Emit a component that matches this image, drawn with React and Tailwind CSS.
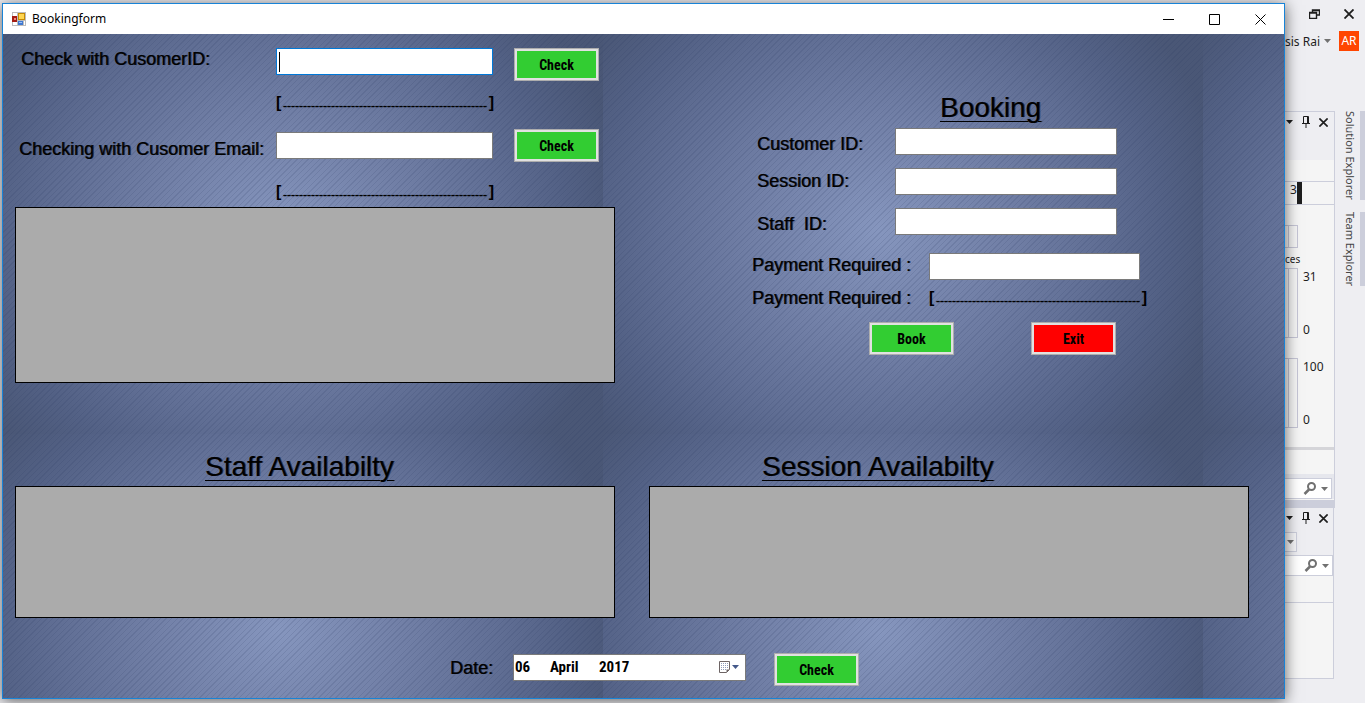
import React from "react";

const label = "text-[18px] leading-5 text-black whitespace-pre [text-shadow:1px_0_rgba(0,0,0,0.6)]";
const box = "h-[27px] border border-[#7a7a7a] bg-white px-1 text-base text-black outline-none";
const heading = "text-[28px] leading-8 font-normal text-black underline decoration-1 underline-offset-4 [text-shadow:1px_0_rgba(0,0,0,0.5)]";
const grid = "border border-black bg-[#ababab]";
const condensed = "font-['Roboto_Condensed','Lato',sans-serif]";

function FormButton({ children, color = "bg-[#32cd32]" }) {
  return (
    <button type="button" className="h-[33px] w-[85px] shrink-0 border border-[#adadad] bg-[#e1e1e1] p-[2px]">
      <span className={`flex h-full items-center justify-center text-[14px] leading-4 font-bold text-black ${condensed} ${color}`}>
        {children}
      </span>
    </button>
  );
}

function Readout() {
  return (
    <output className="flex h-5 w-[218px] items-center text-[16px] leading-4 font-bold text-black">
      <span>[</span>
      <span className="flex-1 pt-[6px] text-center text-xs leading-4 font-normal whitespace-nowrap [text-shadow:0_0_1px_black]">{"-".repeat(51)}</span>
      <span>]</span>
    </output>
  );
}

function CheckRow({ id, text, focused }) {
  return (
    <div className={`flex pl-1 ${focused ? "items-start" : "items-center"}`}>
      <label htmlFor={id} className={`${label} w-[257px] ${focused ? "pt-px pl-[2px]" : "pt-[6px]"}`}>{text}</label>
      <div className={`mr-[21px] flex w-[217px] ${box} ${focused ? "border-[#0078d7]" : ""} items-center px-[2px]`}>
        {focused && <span className="h-5 w-px bg-black" />}
        <input id={id} className="w-full min-w-0 outline-none" />
      </div>
      <FormButton>Check</FormButton>
    </div>
  );
}

function Cross({ size = 11, className = "text-black", width = 1 }) {
  return (
    <svg width={size} height={size} viewBox="0 0 11 11" className={className}>
      <path d="M.5.5l10 10M10.5.5l-10 10" stroke="currentColor" strokeWidth={width} />
    </svg>
  );
}

function Pin() {
  return (
    <svg width="8" height="12" viewBox="0 0 8 12" className="text-[#1e1e1e]">
      <path d="M1.5 7V.5h5V7M0 7.5h8M4 8v4M5.5 1v6" fill="none" stroke="currentColor" />
    </svg>
  );
}

function Caret({ className = "text-[#717171]" }) {
  return (
    <svg width="7" height="4" viewBox="0 0 7 4" className={className}>
      <path d="M0 0h7L3.500 4z" fill="currentColor" />
    </svg>
  );
}

function Search() {
  return (
    <svg width="14" height="13" viewBox="0 0 14 13" className="text-[#717171]">
      <circle cx="8.500" cy="4.500" r="3.500" fill="none" stroke="currentColor" strokeWidth="2" />
      <path d="M6 7.500l-4.500 4.500" stroke="currentColor" strokeWidth="2.500" />
    </svg>
  );
}

function PanelHead() {
  return (
    <div className="flex items-center gap-[9px] pl-px">
      <Caret className="text-[#1e1e1e]" />
      <Pin />
      <Cross size={9} width={2} className="text-[#1e1e1e]" />
    </div>
  );
}

function SearchBar() {
  return (
    <div className="flex h-[21px] items-center justify-end gap-1 border border-l-0 border-[#cccedb] bg-white pr-[3px]">
      <Search />
      <Caret />
    </div>
  );
}

function Meter({ top }) {
  return (
    <div className="flex h-[70px]">
      <div className="flex w-[13px] border border-l-0 border-[#c5c5d5]">
        <div className="w-1 border-r border-[#c5c5d5]" />
      </div>
      <div className="flex flex-col justify-between pt-px pl-[5px]">
        <span>{top}</span>
        <span>0</span>
      </div>
    </div>
  );
}

function Ide() {
  return (
    <aside className="flex w-20 shrink-0 flex-col overflow-hidden font-['Noto_Sans',sans-serif] text-xs leading-4 text-[#1e1e1e]">
      <div className="flex h-7 items-center justify-end gap-6 pr-[11px]">
        <svg width="11" height="10" viewBox="0 0 11 10">
          <path d="M3.500 3V1h7v5H8M.5 3.500h7v6h-7zM3 1.500h8M0 4h8" fill="none" stroke="#1e1e1e" strokeWidth="1.400" />
        </svg>
        <Cross size={10} width={2} className="text-[#1e1e1e]" />
      </div>
      <div className="mt-[3px] flex h-5 items-center pr-[6px]">
        <span className="w-[33px] pt-px whitespace-nowrap">sis Rai</span>
        <span className="ml-[6px]"><Caret /></span>
        <span className="ml-auto flex h-5 w-5 items-center justify-center bg-[#ff4500] text-white">AR</span>
      </div>
      <div className="mt-[60px] flex">
        <div className="w-[50px]">
          <section className="h-[389px] border-t border-r border-[#cccedb] bg-[#f5f5f5]">
            <div className="h-12 bg-[#eeeef2] pt-1"><PanelHead /></div>
            <div className="mt-[21px] flex h-6 border-y border-[#cccedb] pl-[5px]">
              <span>3</span><span className="h-full w-[5px] bg-[#1e1e1e]" />
            </div>
            <div className="mt-5 flex h-[23px] w-[13px] border border-l-0 border-[#c5c5d5]">
              <div className="w-1 border-r border-[#c5c5d5]" />
            </div>
            <div className="mt-[3px] mb-px text-[10px]">ces</div>
            <Meter top="31" />
            <div className="mt-5"><Meter top="100" /></div>
            <div className="mt-[19px] h-[3px] bg-[#d5d5d9]" />
            <div className="h-6" />
            <div className="bg-[#e6e7ed] pt-1 pr-[2px]"><SearchBar /></div>
          </section>
          <div className="h-2 bg-[#cccedb]" />
          <section className="mr-px h-[171px] border-r border-b border-[#cccedb] bg-[#f5f5f5]">
            <div className="h-[47px] bg-[#eeeef2] pt-1">
              <PanelHead />
              <div className="mt-2 flex h-5 w-3 items-center border border-l-0 border-[#cccedb] bg-white/40 pl-[2px]"><Caret /></div>
            </div>
            <SearchBar />
            <div className="h-[27px] border-b border-[#cccedb]" />
          </section>
        </div>
        <nav className="ml-1 flex flex-1 flex-col gap-3 text-[11px] text-[#444]">
          <a href="#solution" className="flex h-[89px] items-center border-r-[5px] border-[#cccedb] whitespace-nowrap [writing-mode:vertical-rl]">Solution Explorer</a>
          <a href="#team" className="flex h-[74px] items-center border-r-[5px] border-[#cccedb] whitespace-nowrap [writing-mode:vertical-rl]">Team Explorer</a>
        </nav>
      </div>
    </aside>
  );
}

function TitleBar() {
  return (
    <header className="flex h-[30px] items-center bg-white pl-[9px]">
      <svg width="14" height="14" viewBox="0 0 14 14">
        <path d="M0 0h14v14H0z" fill="#bcbcbc" />
        <path d="M1 1h4v3H1zM1 10h4v3H1zM12 9h1v4h-1z" fill="#fff" />
        <path d="M0 4h5v6H0z" fill="#a51c12" /><path d="M2 6h2v2H2z" fill="#f08a78" />
        <path d="M6 1h7v7H6z" fill="#c58a05" /><path d="M7 2h5v5H7z" fill="#ffd651" />
        <path d="M6 9h5v4H6z" fill="#3f78d0" /><path d="M7 10h3v1H7z" fill="#9cc0f5" />
      </svg>
      <h1 className="ml-[6px] font-['Noto_Sans',sans-serif] text-xs text-black">Bookingform</h1>
      <div className="ml-auto flex gap-[35px] pr-[18px]">
        <button type="button" aria-label="Minimize">
          <svg width="11" height="11"><path d="M0 5.500h11" stroke="#000" /></svg>
        </button>
        <button type="button" aria-label="Maximize">
          <svg width="11" height="11"><path d="M.5.5h10v10H.5z" fill="none" stroke="#000" /></svg>
        </button>
        <button type="button" aria-label="Close"><Cross /></button>
      </div>
    </header>
  );
}

const tile =
  "bg-[repeating-linear-gradient(135deg,rgba(40,55,95,0.14)_0px,rgba(40,55,95,0.14)_1px,transparent_1px,transparent_4px),radial-gradient(ellipse_350px_320px_at_46%_49%,#8696be_0%,#7280a7_35%,#616f95_62%,#536185_82%,#4a5776_100%)] bg-[size:auto,600px_400px]";

export default function App() {
  return (
    <div className="flex min-h-screen bg-[#eeeef2] font-['Liberation_Sans',sans-serif]">
      <main className="relative mt-[3px] mb-1 ml-[2px] flex flex-1 flex-col border border-[#1883d7] shadow-[0_2px_14px_rgba(0,0,0,0.6)]">
        <TitleBar />
        <form className={`flex-1 pr-[35px] pl-3 ${tile}`}>
          <div className="grid grid-cols-2 gap-x-[34px]">
            <section className="pt-[14px]">
              <CheckRow id="customer" text="Check with CusomerID:" focused />
              <div className="mt-3 mb-4 pl-[261px]"><Readout /></div>
              <CheckRow id="email" text="Checking with Cusomer Email:" />
              <div className="mt-5 mb-[5px] pl-[261px]"><Readout /></div>
              <div className={`${grid} h-[176px]`} />
            </section>

            <section className="pt-[58px] pl-[103px]">
              <h2 className={`${heading} pl-[188px]`}>Booking</h2>
              <div className="mt-1 grid grid-cols-[138px_222px] gap-y-[13px] pl-[5px]">
                <label htmlFor="cid" className={`${label} pt-[6px]`}>Customer ID:</label>
                <input id="cid" className={box} />
                <label htmlFor="sid" className={`${label} pt-[3px]`}>Session ID:</label>
                <input id="sid" className={box} />
                <label htmlFor="stid" className={`${label} pt-[6px]`}>Staff  ID:</label>
                <input id="stid" className={box} />
              </div>
              <div className="mt-[18px] grid grid-cols-[177px_218px] gap-y-2">
                <label htmlFor="pay" className={`${label} pt-[2px]`}>Payment Required :</label>
                <input id="pay" className={`${box} w-[211px]`} />
                <span className={label}>Payment Required :</span>
                <Readout />
              </div>
              <div className="mt-[14px] flex gap-[77px] pl-[117px]">
                <FormButton>Book</FormButton>
                <FormButton color="bg-[#ff0000]">Exit</FormButton>
              </div>
            </section>
          </div>

          <div className="mt-[68px] grid grid-cols-2 gap-x-[34px]">
            <section>
              <h2 className={`${heading} pl-[190px]`}>Staff Availabilty</h2>
              <div className={`${grid} mt-[3px] h-[132px]`} />
            </section>
            <section>
              <h2 className={`${heading} pl-[113px]`}>Session Availabilty</h2>
              <div className={`${grid} mt-[3px] h-[132px]`} />
            </section>
          </div>

          <div className="mt-[35px] flex items-center pb-3 pl-[435px]">
            <label htmlFor="date" className={`${label} mb-1 w-[63px]`}>Date:</label>
            <button type="button" id="date" className={`mb-1 flex h-[27px] w-[233px] items-center border border-[#7a7a7a] bg-white pr-[5px] pl-[1px] text-[15px] font-bold text-black ${condensed}`}>
              <span className="w-[35px] text-left">06</span>
              <span className="w-[49px] text-left">April</span>
              <span>2017</span>
              <svg className="ml-auto" width="21" height="13" viewBox="0 0 21 13">
                <path d="M.5.5h10v8l-3 3h-7z" fill="#fff" stroke="#6d6464" />
                <path d="M2 2.500h7M2 4.500h7M2 6.500h7M2 8.500h5" stroke="#8f9cba" strokeDasharray="1 1" />
                <path d="M7.500 11.500v-3h3z" fill="#6d6464" />
                <path d="M13 4h7l-3.500 4z" fill="#44598a" />
              </svg>
            </button>
            <div className="ml-7"><FormButton>Check</FormButton></div>
          </div>
        </form>
      </main>
      <Ide />
    </div>
  );
}
